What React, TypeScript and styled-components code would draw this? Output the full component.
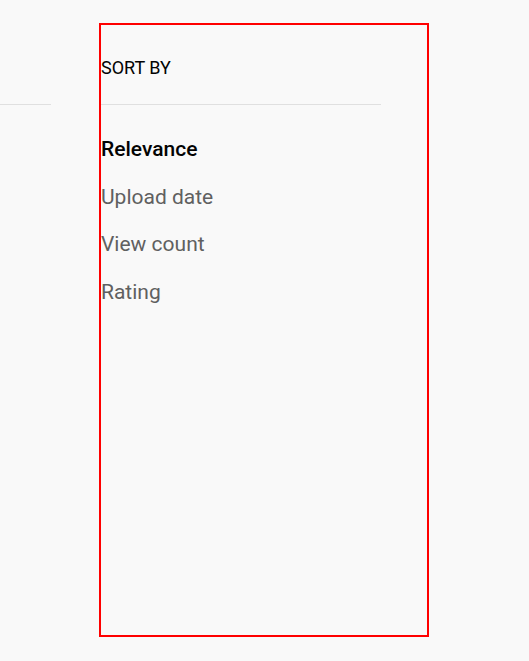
import React from "react";
import styled, { createGlobalStyle } from "styled-components";

const GlobalStyle = createGlobalStyle`
  html, body {
    margin: 0;
    padding: 0;
    background: #f9f9f9;
    font-family: Roboto, "Noto Sans", Arial, sans-serif;
  }
`;

const Page = styled.div`
  padding-top: 23px;
  overflow: hidden;
`;

const FilterRow = styled.div`
  display: flex;
  margin-left: -231px;
`;

const Column = styled.section<{ $highlighted?: boolean }>`
  flex: none;
  box-sizing: border-box;
  width: 330px;
  height: 614px;
  padding-right: 46px;
  border: 2px solid ${(p) => (p.$highlighted ? "#ff0000" : "transparent")};
`;

const GroupTitle = styled.h4`
  margin: 0;
  min-height: 20px;
  padding: 33px 0 26px;
  font-size: 18px;
  line-height: 20px;
  font-weight: 400;
  color: #030303;
  text-transform: uppercase;
  border-bottom: 1px solid #e0e0e0;
  white-space: nowrap;
`;

const OptionList = styled.ul`
  list-style: none;
  margin: 0;
  padding: 21px 0 0;
`;

const Option = styled.li<{ $selected?: boolean }>`
  font-size: 21px;
  line-height: 47.5px;
  font-weight: ${(p) => (p.$selected ? 500 : 400)};
  color: ${(p) => (p.$selected ? "#030303" : "#606060")};
  white-space: nowrap;
  cursor: pointer;
`;

const groups = [
  {
    title: "",
    options: [] as string[],
    selected: -1,
    highlighted: false,
  },
  {
    title: "Sort by",
    options: ["Relevance", "Upload date", "View count", "Rating"],
    selected: 0,
    highlighted: true,
  },
];

export default function App() {
  return (
    <>
      <GlobalStyle />
      <Page>
        <FilterRow>
          {groups.map((g, gi) => (
            <Column key={gi} $highlighted={g.highlighted}>
              <GroupTitle>{g.title}</GroupTitle>
              <OptionList>
                {g.options.map((o, i) => (
                  <Option key={o} $selected={i === g.selected}>
                    {o}
                  </Option>
                ))}
              </OptionList>
            </Column>
          ))}
        </FilterRow>
      </Page>
    </>
  );
}
